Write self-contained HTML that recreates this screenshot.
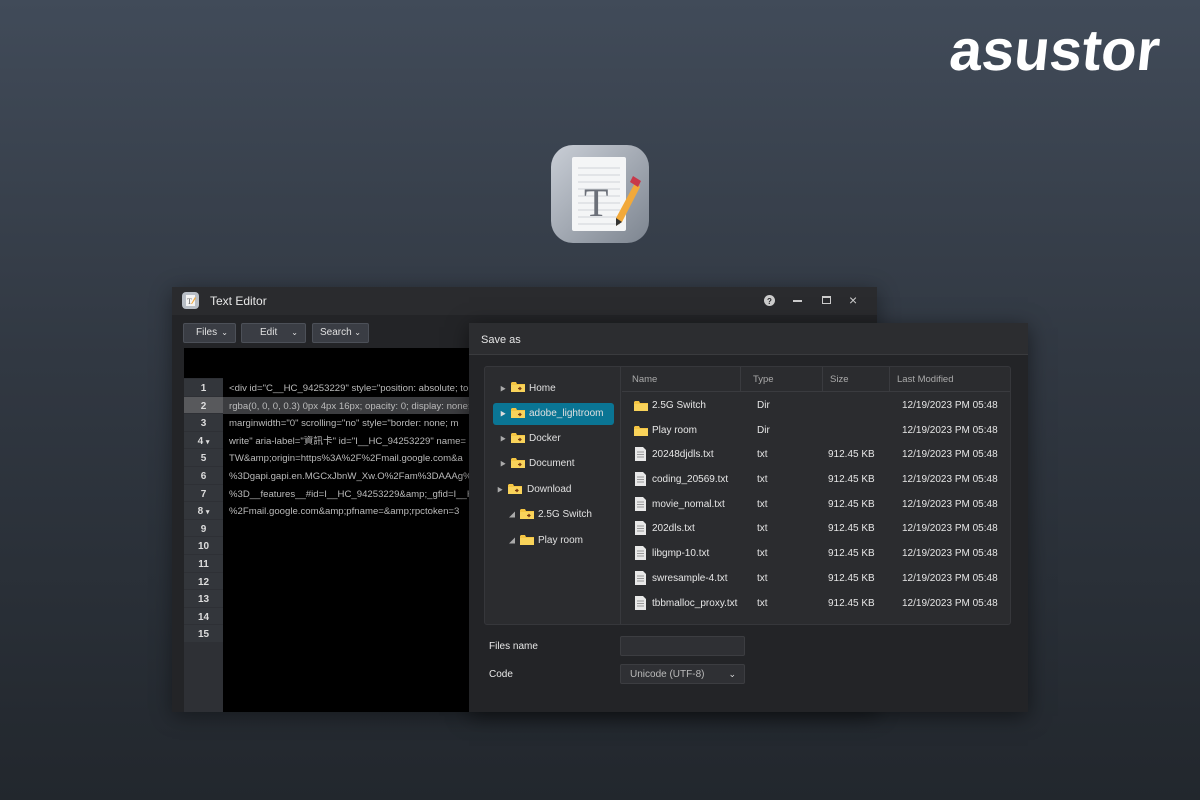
<!DOCTYPE html>
<html><head><meta charset="utf-8">
<style>
*{box-sizing:border-box;margin:0;padding:0}
body{width:1200px;height:800px;overflow:hidden;position:relative;font-family:"Liberation Sans","Noto Sans CJK TC",sans-serif;background:linear-gradient(180deg,#414b59 0%,#313842 45%,#22272d 100%);color:#ddd}
.abs{position:absolute}
.logo{left:950px;top:22px;font-size:58px;line-height:58px;font-weight:bold;color:#fff;letter-spacing:0;transform:scaleX(1.0) skewX(-6deg);transform-origin:left;white-space:nowrap}
.ed{left:172px;top:287px;width:705px;height:425px;background:#232427;box-shadow:0 4px 20px rgba(0,0,0,.4)}
.tb{left:0;top:0;width:705px;height:28px;background:#2a2b2e;font-size:12px;color:#e8e8e8}
.btn{top:36px;height:20px;background:#3a3d44;border:1px solid #4c5058;border-radius:2px;font-size:10px;color:#e0e0e0;line-height:18px}
.btn span{position:absolute;right:7px;top:0;font-size:8px}
.ln{position:absolute;left:12px;width:39px;height:16.6px;background:#33363b;font-size:10px;color:#ddd;text-align:center;line-height:19px;font-weight:bold}
.code{position:absolute;left:57px;font-size:9.6px;color:#bbb;white-space:nowrap;line-height:17.6px}
.dlg{left:469px;top:323px;width:559px;height:389px;background:#232427;box-shadow:0 4px 20px rgba(0,0,0,.5)}
.dt{left:0;top:0;width:559px;height:32px;background:#2c2d30;border-bottom:1px solid #3a3b3e;font-size:11px;line-height:35px;padding-left:12px;color:#e6e6e6}
.panel{left:15px;top:43px;width:527px;height:259px;background:#2b2c2f;border:1px solid #36373b;border-radius:3px;overflow:hidden}
.tree{left:0;top:0;width:136px;height:259px;border-right:1px solid #38393d}
.ti{position:absolute;font-size:10px;color:#e0e0e0;height:22px;line-height:24px}
.hdr{left:137px;top:0;width:390px;height:25px;border-bottom:1px solid #3a3b3f;font-size:9.5px;color:#aaa;line-height:26px}
.row{position:absolute;left:137px;width:390px;height:24px;font-size:10px;color:#e6e6e6;line-height:26px}
.row span{position:absolute}
.inp{background:#2f3034;border:1px solid #3c3d41;border-radius:2px}
.lbl{font-size:10px;color:#e8e8e8}
</style></head><body>
<div class="abs logo">asustor</div>

<svg class="abs" style="left:550px;top:144px" width="100" height="100" viewBox="0 0 100 100">
<defs><linearGradient id="g1" x1="0" y1="0" x2="1" y2="1"><stop offset="0" stop-color="#c9ced6"/><stop offset="1" stop-color="#7d8590"/></linearGradient></defs>
<rect x="1" y="1" width="98" height="98" rx="22" fill="url(#g1)"/>
<rect x="22" y="13" width="54" height="74" rx="2" fill="#f4f5f6"/>
<g stroke="#d0d3d8" stroke-width="1"><line x1="28" y1="24" x2="70" y2="24"/><line x1="28" y1="31" x2="70" y2="31"/><line x1="28" y1="38" x2="70" y2="38"/><line x1="28" y1="45" x2="70" y2="45"/><line x1="28" y1="52" x2="70" y2="52"/><line x1="28" y1="59" x2="70" y2="59"/><line x1="28" y1="66" x2="70" y2="66"/><line x1="28" y1="73" x2="70" y2="73"/><line x1="28" y1="80" x2="70" y2="80"/></g>
<text x="34" y="72" font-family="Liberation Serif,serif" font-size="40" fill="#6c7079">T</text>
<path d="M86 37 L90 43 L72 78 L66 82 L66 74 Z" fill="#f2a93a"/>
<path d="M83 32 L91 37 L88 43 L80 38 Z" fill="#c8394a"/>
<path d="M66 74 L66 82 L72 78 Z" fill="#333"/>
</svg>

<div class="abs ed">
 <div class="abs tb">
  <svg class="abs" style="left:10px;top:5px" width="17" height="17" viewBox="0 0 17 17"><rect width="17" height="17" rx="4" fill="#b8bec6"/><rect x="4" y="3" width="9" height="11" fill="#f4f4f4"/><text x="5" y="12" font-size="8" fill="#666" font-family="Liberation Serif">T</text><path d="M13 5 L14 6 L10 12 L9 12 Z" fill="#f2a93a"/></svg>
  <div class="abs" style="left:38px;top:7px">Text Editor</div>
  <svg class="abs" style="left:592px;top:8px" width="11" height="11" viewBox="0 0 11 11"><circle cx="5.5" cy="5.5" r="5.5" fill="#ccc"/><text x="3" y="9" font-size="8" font-weight="bold" fill="#2a2b2e" font-family="Liberation Sans">?</text></svg>
  <div class="abs" style="left:621px;top:13px;width:9px;height:1.5px;background:#ccc"></div>
  <div class="abs" style="left:650px;top:9px;width:9px;height:8px;border:1.5px solid #ccc;border-top-width:2px"></div>
  <div class="abs" style="left:677px;top:5px;font-size:14px;color:#ccc">×</div>
 </div>
 <div class="abs btn" style="left:11px;width:53px;padding-left:12px">Files<span>⌄</span></div>
 <div class="abs btn" style="left:69px;width:65px;padding-left:18px">Edit<span>⌄</span></div>
 <div class="abs btn" style="left:140px;width:57px;padding-left:7px">Search<span>⌄</span></div>
 <div class="abs" style="left:671px;top:36px;width:23px;height:8px;background:#4a4d55;border-radius:2px"></div>
 <div class="abs" style="left:12px;top:61px;width:300px;height:364px;background:#000"></div>
 <div class="abs" style="left:12px;top:91px;width:39px;height:334px;background:#2e3035"></div>
 <div class="abs" style="left:51px;top:110px;width:250px;height:17px;background:#3c3d40"></div>
 <div class="ln" style="top:92px">1</div>
 <div class="ln" style="top:109.6px;background:#58595c">2</div>
 <div class="ln" style="top:127.2px">3</div>
 <div class="ln" style="top:144.8px">4 <span style="font-size:7px">▾</span></div>
 <div class="ln" style="top:162.4px">5</div>
 <div class="ln" style="top:180px">6</div>
 <div class="ln" style="top:197.6px">7</div>
 <div class="ln" style="top:215.2px">8 <span style="font-size:7px">▾</span></div>
 <div class="ln" style="top:232.8px">9</div>
 <div class="ln" style="top:250.4px">10</div>
 <div class="ln" style="top:268px">11</div>
 <div class="ln" style="top:285.6px">12</div>
 <div class="ln" style="top:303.2px">13</div>
 <div class="ln" style="top:320.8px">14</div>
 <div class="ln" style="top:338.4px">15</div>
 <div class="abs" style="left:51px;top:93px;width:246px;height:160px;overflow:hidden">
  <div class="code" style="left:6px;top:0">&lt;div id="C__HC_94253229" style="position: absolute; to</div>
  <div class="code" style="left:6px;top:17.6px">rgba(0, 0, 0, 0.3) 0px 4px 16px; opacity: 0; display: none;</div>
  <div class="code" style="left:6px;top:35.2px">marginwidth="0" scrolling="no" style="border: none; m</div>
  <div class="code" style="left:6px;top:52.8px">write" aria-label="資訊卡" id="I__HC_94253229" name=</div>
  <div class="code" style="left:6px;top:70.4px">TW&amp;amp;origin=https%3A%2F%2Fmail.google.com&amp;a</div>
  <div class="code" style="left:6px;top:88px">%3Dgapi.gapi.en.MGCxJbnW_Xw.O%2Fam%3DAAAg%2</div>
  <div class="code" style="left:6px;top:105.6px">%3D__features__#id=I__HC_94253229&amp;amp;_gfid=I__HC</div>
  <div class="code" style="left:6px;top:123.2px">%2Fmail.google.com&amp;amp;pfname=&amp;amp;rpctoken=3</div>
 </div>
</div>

<svg width="0" height="0" style="position:absolute"><defs>
<g id="fo"><path d="M0 2 L0 11 L14 11 L14 3 L6 3 L5 1 L1 1 Z" fill="#f5c542"/><rect x="0" y="4" width="14" height="7" fill="#f9d35a"/></g>
<g id="fa"><use href="#fo"/><path d="M7 7.5 L10 7.5 M8.5 6 L10 7.5 L8.5 9" stroke="#7a3b10" stroke-width="1.2" fill="none"/></g>
<g id="fi"><path d="M0 0 L8 0 L11 3 L11 14 L0 14 Z" fill="#e8e8e8"/><g stroke="#999" stroke-width="1"><line x1="2" y1="5" x2="9" y2="5"/><line x1="2" y1="7.5" x2="9" y2="7.5"/><line x1="2" y1="10" x2="9" y2="10"/></g></g>
</defs></svg>

<div class="abs dlg">
 <div class="abs dt">Save as</div>
 <div class="abs panel">
  <div class="abs tree">
   <div class="abs" style="left:8px;top:36px;width:121px;height:22px;background:#0a7594;border-radius:3px"></div>
   <div class="ti" style="left:15px;top:10px"><span style="font-size:6px;color:#aaa">▶</span></div>
   <svg class="abs" style="left:26px;top:14px" width="14" height="12"><use href="#fa"/></svg><div class="ti" style="left:44px;top:10px">Home</div>
   <div class="ti" style="left:15px;top:35px"><span style="font-size:6px;color:#ddd">▶</span></div>
   <svg class="abs" style="left:26px;top:40px" width="14" height="12"><use href="#fa"/></svg><div class="ti" style="left:44px;top:35px">adobe_lightroom</div>
   <div class="ti" style="left:15px;top:60px"><span style="font-size:6px;color:#aaa">▶</span></div>
   <svg class="abs" style="left:26px;top:65px" width="14" height="12"><use href="#fa"/></svg><div class="ti" style="left:44px;top:60px">Docker</div>
   <div class="ti" style="left:15px;top:85px"><span style="font-size:6px;color:#aaa">▶</span></div>
   <svg class="abs" style="left:26px;top:90px" width="14" height="12"><use href="#fa"/></svg><div class="ti" style="left:44px;top:85px">Document</div>
   <div class="ti" style="left:12px;top:111px"><span style="font-size:6px;color:#aaa">▶</span></div>
   <svg class="abs" style="left:23px;top:116px" width="14" height="12"><use href="#fa"/></svg><div class="ti" style="left:42px;top:111px">Download</div>
   <div class="ti" style="left:24px;top:136px"><span style="font-size:6px;color:#aaa">◢</span></div>
   <svg class="abs" style="left:35px;top:141px" width="14" height="12"><use href="#fa"/></svg><div class="ti" style="left:53px;top:136px">2.5G Switch</div>
   <div class="ti" style="left:24px;top:162px"><span style="font-size:6px;color:#aaa">◢</span></div>
   <svg class="abs" style="left:35px;top:167px" width="14" height="12"><use href="#fo"/></svg><div class="ti" style="left:53px;top:162px">Play room</div>
  </div>
  <div class="abs hdr">
   <span class="abs" style="left:10px">Name</span>
   <span class="abs" style="left:118px;top:0;width:1px;height:25px;background:#3a3b3f"></span>
   <span class="abs" style="left:131px">Type</span>
   <span class="abs" style="left:200px;top:0;width:1px;height:25px;background:#3a3b3f"></span>
   <span class="abs" style="left:208px">Size</span>
   <span class="abs" style="left:267px;top:0;width:1px;height:25px;background:#3a3b3f"></span>
   <span class="abs" style="left:275px">Last Modified</span>
  </div>
  <div class="row" style="top:26px"><svg class="abs" style="left:12px;top:7px" width="14" height="12"><use href="#fo"/></svg><span style="left:30px">2.5G Switch</span><span style="left:135px">Dir</span><span style="left:280px">12/19/2023 PM 05:48</span></div>
  <div class="row" style="top:51px"><svg class="abs" style="left:12px;top:7px" width="14" height="12"><use href="#fo"/></svg><span style="left:30px">Play room</span><span style="left:135px">Dir</span><span style="left:280px">12/19/2023 PM 05:48</span></div>
  <div class="row" style="top:75px"><svg class="abs" style="left:13px;top:5px" width="11" height="14"><use href="#fi"/></svg><span style="left:30px">20248djdls.txt</span><span style="left:135px">txt</span><span style="left:206px">912.45 KB</span><span style="left:280px">12/19/2023 PM 05:48</span></div>
  <div class="row" style="top:100px"><svg class="abs" style="left:13px;top:5px" width="11" height="14"><use href="#fi"/></svg><span style="left:30px">coding_20569.txt</span><span style="left:135px">txt</span><span style="left:206px">912.45 KB</span><span style="left:280px">12/19/2023 PM 05:48</span></div>
  <div class="row" style="top:125px"><svg class="abs" style="left:13px;top:5px" width="11" height="14"><use href="#fi"/></svg><span style="left:30px">movie_nomal.txt</span><span style="left:135px">txt</span><span style="left:206px">912.45 KB</span><span style="left:280px">12/19/2023 PM 05:48</span></div>
  <div class="row" style="top:149px"><svg class="abs" style="left:13px;top:5px" width="11" height="14"><use href="#fi"/></svg><span style="left:30px">202dls.txt</span><span style="left:135px">txt</span><span style="left:206px">912.45 KB</span><span style="left:280px">12/19/2023 PM 05:48</span></div>
  <div class="row" style="top:174px"><svg class="abs" style="left:13px;top:5px" width="11" height="14"><use href="#fi"/></svg><span style="left:30px">libgmp-10.txt</span><span style="left:135px">txt</span><span style="left:206px">912.45 KB</span><span style="left:280px">12/19/2023 PM 05:48</span></div>
  <div class="row" style="top:199px"><svg class="abs" style="left:13px;top:5px" width="11" height="14"><use href="#fi"/></svg><span style="left:30px">swresample-4.txt</span><span style="left:135px">txt</span><span style="left:206px">912.45 KB</span><span style="left:280px">12/19/2023 PM 05:48</span></div>
  <div class="row" style="top:224px"><svg class="abs" style="left:13px;top:5px" width="11" height="14"><use href="#fi"/></svg><span style="left:30px">tbbmalloc_proxy.txt</span><span style="left:135px">txt</span><span style="left:206px">912.45 KB</span><span style="left:280px">12/19/2023 PM 05:48</span></div>
 </div>
 <div class="abs lbl" style="left:20px;top:318px">Files name</div>
 <div class="abs inp" style="left:151px;top:313px;width:125px;height:20px"></div>
 <div class="abs lbl" style="left:20px;top:346px">Code</div>
 <div class="abs inp" style="left:151px;top:341px;width:125px;height:20px;font-size:10px;color:#bbb;line-height:19px;padding-left:9px">Unicode (UTF-8)<span style="position:absolute;right:8px;top:0;font-size:9px;color:#ddd">⌄</span></div>
</div>
</body></html>
